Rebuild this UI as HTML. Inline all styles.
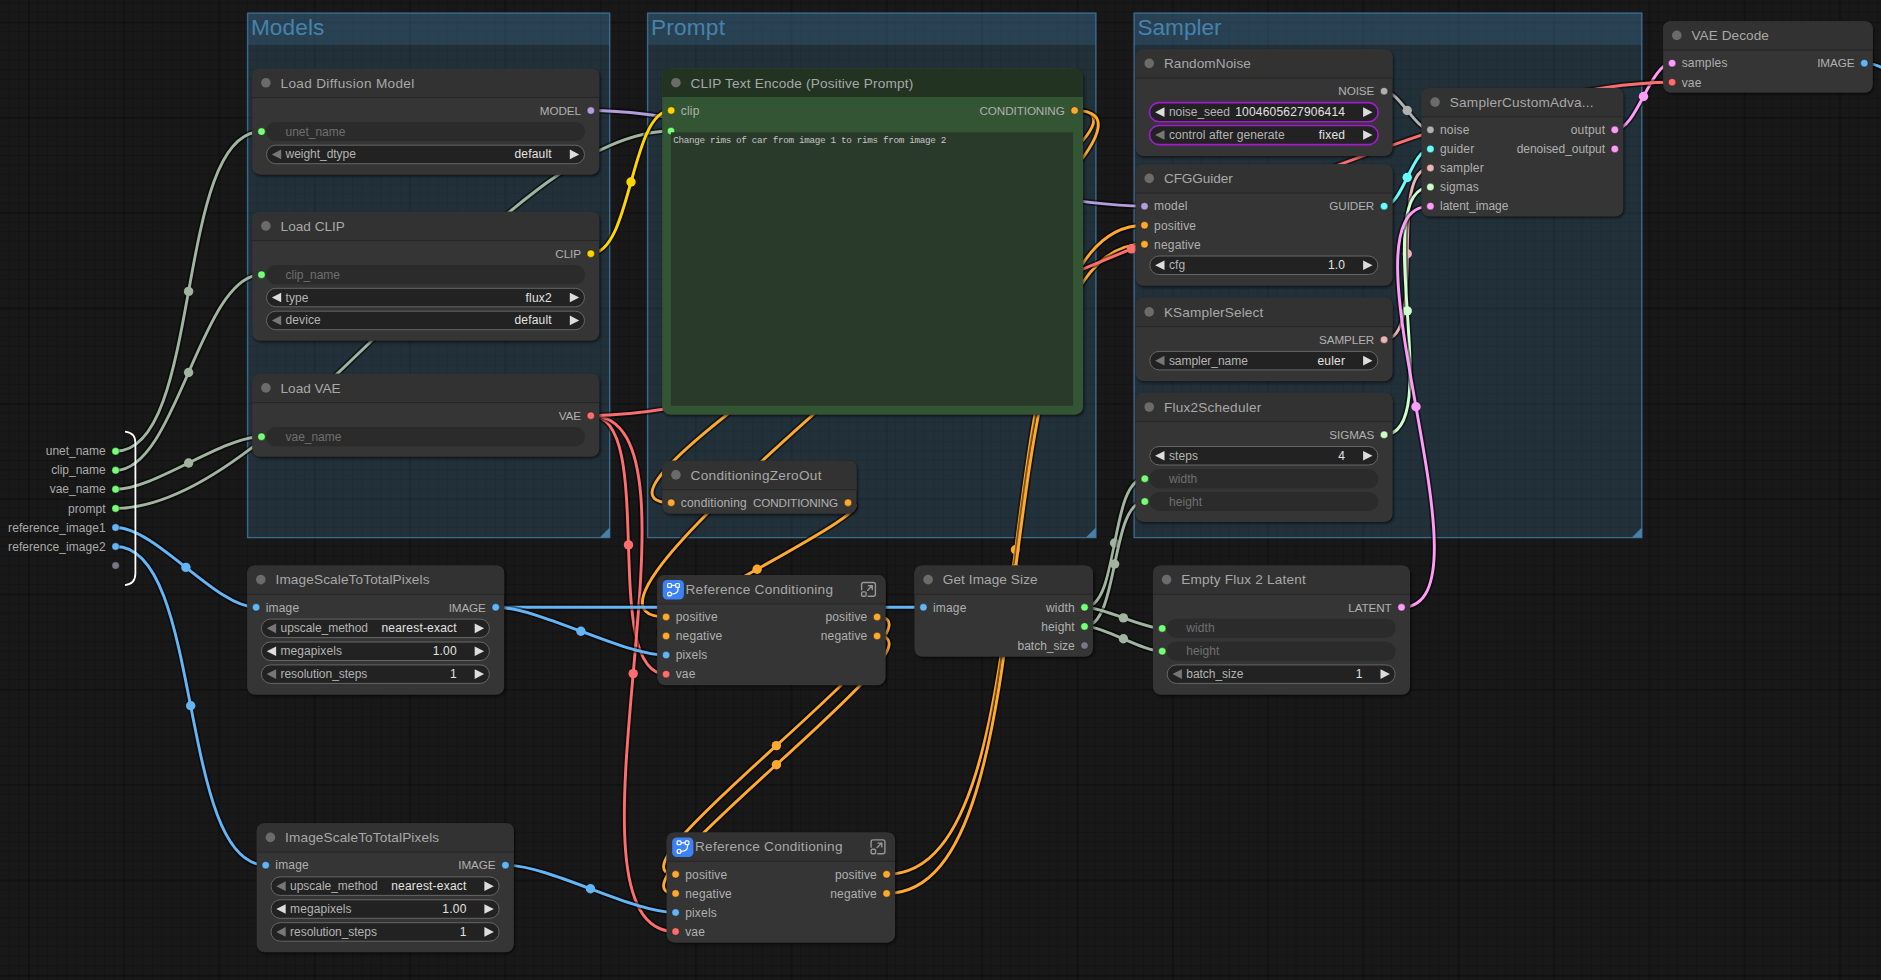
<!DOCTYPE html>
<html lang="en"><head><meta charset="utf-8"><title>ComfyUI</title>
<style>
html,body{margin:0;padding:0;}
body{width:1881px;height:980px;overflow:hidden;position:relative;background-color:#181818;
 font-family:"Liberation Sans",Arial,sans-serif;
 background-image:
  linear-gradient(to right,rgba(0,0,0,.15) 1px,transparent 1px),
  linear-gradient(to bottom,rgba(0,0,0,.15) 1px,transparent 1px),
  linear-gradient(to right,rgba(0,0,0,.18) 1.5px,transparent 1.5px),
  linear-gradient(to bottom,rgba(0,0,0,.18) 1.5px,transparent 1.5px);
 background-size:9.535px 9.535px,9.535px 9.535px,95.35px 95.35px,95.35px 95.35px;
 background-position:27.9px 21.6px,27.9px 21.6px,27.9px 21.6px,27.9px 21.6px;}
#graph{position:absolute;left:0;top:0;width:1881px;height:980px;overflow:hidden;}
#graph text{font-family:"Liberation Sans",Arial,sans-serif;}
#graph text.m{font-family:"Liberation Mono",monospace;}
</style></head><body>
<svg id="graph" width="1881" height="980" viewBox="0 0 1881 980">
<defs><filter id="sh" x="-5%" y="-10%" width="110%" height="125%"><feGaussianBlur stdDeviation="1.6"/></filter></defs>
<g id="groups">
<rect x="247.6" y="13.1" width="362.1" height="524.5" fill="rgba(63,120,158,.25)" stroke="rgba(63,120,158,.85)" stroke-width="1.4"/>
<rect x="247.6" y="13.1" width="362.1" height="31.9" fill="rgba(63,120,158,.25)"/>
<path d="M609.7 527.6V537.6H599.7Z" fill="#4680ab"/>
<text x="250.90" y="34.80" font-size="22.6" fill="#4682ad" letter-spacing="0.12">Models</text>
<rect x="647.6" y="13.1" width="448.3" height="524.5" fill="rgba(63,120,158,.25)" stroke="rgba(63,120,158,.85)" stroke-width="1.4"/>
<rect x="647.6" y="13.1" width="448.3" height="31.9" fill="rgba(63,120,158,.25)"/>
<path d="M1095.9 527.6V537.6H1085.9Z" fill="#4680ab"/>
<text x="650.90" y="34.80" font-size="22.6" fill="#4682ad" letter-spacing="0.24">Prompt</text>
<rect x="1134.1" y="13.1" width="507.7" height="524.5" fill="rgba(63,120,158,.25)" stroke="rgba(63,120,158,.85)" stroke-width="1.4"/>
<rect x="1134.1" y="13.1" width="507.7" height="31.9" fill="rgba(63,120,158,.25)"/>
<path d="M1641.8 527.6V537.6H1631.8Z" fill="#4680ab"/>
<text x="1137.40" y="34.80" font-size="22.6" fill="#4682ad" letter-spacing="0.02">Sampler</text>
</g>
<g id="links" fill="none">
<path d="M115.6 451.2C203.4 451.2 173.7 131.6 261.5 131.6" stroke="rgba(0,0,0,.5)" stroke-width="6.4"/>
<path d="M115.6 451.2C203.4 451.2 173.7 131.6 261.5 131.6" stroke="#A0B4A0" stroke-width="2.9"/>
<circle cx="188.6" cy="291.4" r="4.7" fill="#A0B4A0"/>
<path d="M115.6 470.3C176.6 470.3 200.5 274.7 261.5 274.7" stroke="rgba(0,0,0,.5)" stroke-width="6.4"/>
<path d="M115.6 470.3C176.6 470.3 200.5 274.7 261.5 274.7" stroke="#A0B4A0" stroke-width="2.9"/>
<circle cx="188.6" cy="372.5" r="4.7" fill="#A0B4A0"/>
<path d="M115.6 489.3C154.4 489.3 222.7 436.7 261.5 436.7" stroke="rgba(0,0,0,.5)" stroke-width="6.4"/>
<path d="M115.6 489.3C154.4 489.3 222.7 436.7 261.5 436.7" stroke="#A0B4A0" stroke-width="2.9"/>
<circle cx="188.6" cy="463.0" r="4.7" fill="#A0B4A0"/>
<path d="M115.6 508.4C283.5 508.4 503.1 131.0 671.0 131.0" stroke="rgba(0,0,0,.5)" stroke-width="6.4"/>
<path d="M115.6 508.4C283.5 508.4 503.1 131.0 671.0 131.0" stroke="#A0B4A0" stroke-width="2.9"/>
<circle cx="393.3" cy="319.7" r="4.7" fill="#A0B4A0"/>
<path d="M590.8 110.5C731.3 110.5 1004.0 206.1 1144.5 206.1" stroke="rgba(0,0,0,.5)" stroke-width="6.4"/>
<path d="M590.8 110.5C731.3 110.5 1004.0 206.1 1144.5 206.1" stroke="#B39DDB" stroke-width="2.9"/>
<circle cx="867.6" cy="158.3" r="4.7" fill="#B39DDB"/>
<path d="M590.8 253.6C631.9 253.6 630.1 110.4 671.2 110.4" stroke="rgba(0,0,0,.5)" stroke-width="6.4"/>
<path d="M590.8 253.6C631.9 253.6 630.1 110.4 671.2 110.4" stroke="#FFD500" stroke-width="2.9"/>
<circle cx="631.0" cy="182.0" r="4.7" fill="#FFD500"/>
<path d="M590.8 415.6C658.1 415.6 598.8 674.2 666.1 674.2" stroke="rgba(0,0,0,.5)" stroke-width="6.4"/>
<path d="M590.8 415.6C658.1 415.6 598.8 674.2 666.1 674.2" stroke="#FF6E6E" stroke-width="2.9"/>
<circle cx="628.5" cy="544.9" r="4.7" fill="#FF6E6E"/>
<path d="M590.8 415.6C721.5 415.6 544.9 931.6 675.6 931.6" stroke="rgba(0,0,0,.5)" stroke-width="6.4"/>
<path d="M590.8 415.6C721.5 415.6 544.9 931.6 675.6 931.6" stroke="#FF6E6E" stroke-width="2.9"/>
<circle cx="633.2" cy="673.6" r="4.7" fill="#FF6E6E"/>
<path d="M1074.6 110.4C1215.3 110.4 530.5 502.6 671.2 502.6" stroke="rgba(0,0,0,.5)" stroke-width="6.4"/>
<path d="M1074.6 110.4C1215.3 110.4 530.5 502.6 671.2 502.6" stroke="#FFA931" stroke-width="2.9"/>
<circle cx="872.9" cy="306.5" r="4.7" fill="#FFA931"/>
<path d="M1074.6 110.4C1237.3 110.4 503.4 616.9 666.1 616.9" stroke="rgba(0,0,0,.5)" stroke-width="6.4"/>
<path d="M1074.6 110.4C1237.3 110.4 503.4 616.9 666.1 616.9" stroke="#FFA931" stroke-width="2.9"/>
<circle cx="870.4" cy="363.7" r="4.7" fill="#FFA931"/>
<path d="M848.0 502.6C904.4 502.6 609.7 636.0 666.1 636.0" stroke="rgba(0,0,0,.5)" stroke-width="6.4"/>
<path d="M848.0 502.6C904.4 502.6 609.7 636.0 666.1 636.0" stroke="#FFA931" stroke-width="2.9"/>
<circle cx="757.1" cy="569.3" r="4.7" fill="#FFA931"/>
<path d="M877.1 616.9C958.8 616.9 593.9 874.3 675.6 874.3" stroke="rgba(0,0,0,.5)" stroke-width="6.4"/>
<path d="M877.1 616.9C958.8 616.9 593.9 874.3 675.6 874.3" stroke="#FFA931" stroke-width="2.9"/>
<circle cx="776.4" cy="745.6" r="4.7" fill="#FFA931"/>
<path d="M877.1 636.0C958.8 636.0 593.9 893.4 675.6 893.4" stroke="rgba(0,0,0,.5)" stroke-width="6.4"/>
<path d="M877.1 636.0C958.8 636.0 593.9 893.4 675.6 893.4" stroke="#FFA931" stroke-width="2.9"/>
<circle cx="776.4" cy="764.7" r="4.7" fill="#FFA931"/>
<path d="M886.6 874.3C1061.2 874.3 969.9 225.2 1144.5 225.2" stroke="rgba(0,0,0,.5)" stroke-width="6.4"/>
<path d="M886.6 874.3C1061.2 874.3 969.9 225.2 1144.5 225.2" stroke="#FFA931" stroke-width="2.9"/>
<circle cx="1015.5" cy="549.8" r="4.7" fill="#FFA931"/>
<path d="M886.6 893.4C1061.2 893.4 969.9 244.3 1144.5 244.3" stroke="rgba(0,0,0,.5)" stroke-width="6.4"/>
<path d="M886.6 893.4C1061.2 893.4 969.9 244.3 1144.5 244.3" stroke="#FFA931" stroke-width="2.9"/>
<circle cx="1015.5" cy="568.9" r="4.7" fill="#FFA931"/>
<path d="M115.6 527.5C156.0 527.5 215.7 607.3 256.1 607.3" stroke="rgba(0,0,0,.5)" stroke-width="6.4"/>
<path d="M115.6 527.5C156.0 527.5 215.7 607.3 256.1 607.3" stroke="#64B5F6" stroke-width="2.9"/>
<circle cx="185.9" cy="567.4" r="4.7" fill="#64B5F6"/>
<path d="M115.6 546.5C203.7 546.5 177.6 865.1 265.7 865.1" stroke="rgba(0,0,0,.5)" stroke-width="6.4"/>
<path d="M115.6 546.5C203.7 546.5 177.6 865.1 265.7 865.1" stroke="#64B5F6" stroke-width="2.9"/>
<circle cx="190.7" cy="705.8" r="4.7" fill="#64B5F6"/>
<path d="M495.7 607.3C602.6 607.3 816.5 607.3 923.4 607.3" stroke="rgba(0,0,0,.5)" stroke-width="6.4"/>
<path d="M495.7 607.3C602.6 607.3 816.5 607.3 923.4 607.3" stroke="#64B5F6" stroke-width="2.9"/>
<circle cx="709.5" cy="607.3" r="4.7" fill="#64B5F6"/>
<path d="M495.7 607.3C539.9 607.3 621.9 655.1 666.1 655.1" stroke="rgba(0,0,0,.5)" stroke-width="6.4"/>
<path d="M495.7 607.3C539.9 607.3 621.9 655.1 666.1 655.1" stroke="#64B5F6" stroke-width="2.9"/>
<circle cx="580.9" cy="631.2" r="4.7" fill="#64B5F6"/>
<path d="M505.4 865.1C549.6 865.1 631.4 912.5 675.6 912.5" stroke="rgba(0,0,0,.5)" stroke-width="6.4"/>
<path d="M505.4 865.1C549.6 865.1 631.4 912.5 675.6 912.5" stroke="#64B5F6" stroke-width="2.9"/>
<circle cx="590.5" cy="888.8" r="4.7" fill="#64B5F6"/>
<path d="M1084.5 607.3C1120.0 607.3 1109.3 478.7 1144.8 478.7" stroke="rgba(0,0,0,.5)" stroke-width="6.4"/>
<path d="M1084.5 607.3C1120.0 607.3 1109.3 478.7 1144.8 478.7" stroke="#A0B4A0" stroke-width="2.9"/>
<circle cx="1114.6" cy="543.0" r="4.7" fill="#A0B4A0"/>
<path d="M1084.5 626.4C1119.2 626.4 1110.1 501.6 1144.8 501.6" stroke="rgba(0,0,0,.5)" stroke-width="6.4"/>
<path d="M1084.5 626.4C1119.2 626.4 1110.1 501.6 1144.8 501.6" stroke="#A0B4A0" stroke-width="2.9"/>
<circle cx="1114.6" cy="564.0" r="4.7" fill="#A0B4A0"/>
<path d="M1084.5 607.3C1104.6 607.3 1142.1 628.4 1162.2 628.4" stroke="rgba(0,0,0,.5)" stroke-width="6.4"/>
<path d="M1084.5 607.3C1104.6 607.3 1142.1 628.4 1162.2 628.4" stroke="#A0B4A0" stroke-width="2.9"/>
<circle cx="1123.4" cy="617.9" r="4.7" fill="#A0B4A0"/>
<path d="M1084.5 626.4C1104.9 626.4 1141.8 651.3 1162.2 651.3" stroke="rgba(0,0,0,.5)" stroke-width="6.4"/>
<path d="M1084.5 626.4C1104.9 626.4 1141.8 651.3 1162.2 651.3" stroke="#A0B4A0" stroke-width="2.9"/>
<circle cx="1123.4" cy="638.8" r="4.7" fill="#A0B4A0"/>
<path d="M1384.1 91.1C1399.2 91.1 1415.3 129.8 1430.4 129.8" stroke="rgba(0,0,0,.5)" stroke-width="6.4"/>
<path d="M1384.1 91.1C1399.2 91.1 1415.3 129.8 1430.4 129.8" stroke="#B0B0B0" stroke-width="2.9"/>
<circle cx="1407.2" cy="110.5" r="4.7" fill="#B0B0B0"/>
<path d="M1384.1 206.1C1402.5 206.1 1412.0 148.9 1430.4 148.9" stroke="rgba(0,0,0,.5)" stroke-width="6.4"/>
<path d="M1384.1 206.1C1402.5 206.1 1412.0 148.9 1430.4 148.9" stroke="#66FFFF" stroke-width="2.9"/>
<circle cx="1407.2" cy="177.5" r="4.7" fill="#66FFFF"/>
<path d="M1384.1 339.6C1428.5 339.6 1386.0 168.0 1430.4 168.0" stroke="rgba(0,0,0,.5)" stroke-width="6.4"/>
<path d="M1384.1 339.6C1428.5 339.6 1386.0 168.0 1430.4 168.0" stroke="#ECB4B4" stroke-width="2.9"/>
<circle cx="1407.2" cy="253.8" r="4.7" fill="#ECB4B4"/>
<path d="M1384.1 434.7C1447.1 434.7 1367.4 187.1 1430.4 187.1" stroke="rgba(0,0,0,.5)" stroke-width="6.4"/>
<path d="M1384.1 434.7C1447.1 434.7 1367.4 187.1 1430.4 187.1" stroke="#CDFFCD" stroke-width="2.9"/>
<circle cx="1407.2" cy="310.9" r="4.7" fill="#CDFFCD"/>
<path d="M1401.5 607.3C1502.1 607.3 1329.8 206.1 1430.4 206.1" stroke="rgba(0,0,0,.5)" stroke-width="6.4"/>
<path d="M1401.5 607.3C1502.1 607.3 1329.8 206.1 1430.4 206.1" stroke="#FF9CF9" stroke-width="2.9"/>
<circle cx="1416.0" cy="406.7" r="4.7" fill="#FF9CF9"/>
<path d="M1614.8 129.8C1636.8 129.8 1650.1 63.1 1672.1 63.1" stroke="rgba(0,0,0,.5)" stroke-width="6.4"/>
<path d="M1614.8 129.8C1636.8 129.8 1650.1 63.1 1672.1 63.1" stroke="#FF9CF9" stroke-width="2.9"/>
<circle cx="1643.5" cy="96.5" r="4.7" fill="#FF9CF9"/>
<path d="M1864.3 63.1C1943.5 63.1 1970.8 320.0 2050.0 320.0" stroke="rgba(0,0,0,.5)" stroke-width="6.4"/>
<path d="M1864.3 63.1C1943.5 63.1 1970.8 320.0 2050.0 320.0" stroke="#64B5F6" stroke-width="2.9"/>
<circle cx="1957.2" cy="191.6" r="4.7" fill="#64B5F6"/>
<path d="M590.8 415.6C873.7 415.6 1389.2 82.2 1672.1 82.2" stroke="rgba(0,0,0,.5)" stroke-width="6.4"/>
<path d="M590.8 415.6C873.7 415.6 1389.2 82.2 1672.1 82.2" stroke="#FF6E6E" stroke-width="2.9"/>
<circle cx="1131.5" cy="248.9" r="4.7" fill="#FF6E6E"/>
</g>
<g id="subgraph-inputs">
<path d="M125 431.6 Q135.4 432.6 135.4 443 L135.4 573.6 Q135.4 584 125 585.2" stroke="#fff" stroke-width="1.8" fill="none"/>
<circle cx="115.60" cy="451.20" r="3.75" fill="#77FF77" stroke="rgba(0,0,0,.55)" stroke-width=".7"/>
<text x="105.57" y="455.30" font-size="12" fill="#aaa" text-anchor="end" letter-spacing="-0.03">unet_name</text>
<circle cx="115.60" cy="470.30" r="3.75" fill="#77FF77" stroke="rgba(0,0,0,.55)" stroke-width=".7"/>
<text x="105.57" y="474.40" font-size="12" fill="#aaa" text-anchor="end" letter-spacing="-0.03">clip_name</text>
<circle cx="115.60" cy="489.30" r="3.75" fill="#77FF77" stroke="rgba(0,0,0,.55)" stroke-width=".7"/>
<text x="105.57" y="493.40" font-size="12" fill="#aaa" text-anchor="end" letter-spacing="-0.03">vae_name</text>
<circle cx="115.60" cy="508.40" r="3.75" fill="#77FF77" stroke="rgba(0,0,0,.55)" stroke-width=".7"/>
<text x="105.65" y="512.50" font-size="12" fill="#aaa" text-anchor="end" letter-spacing="0.05">prompt</text>
<circle cx="115.60" cy="527.50" r="3.75" fill="#64B5F6" stroke="rgba(0,0,0,.55)" stroke-width=".7"/>
<text x="105.65" y="531.60" font-size="12" fill="#aaa" text-anchor="end" letter-spacing="0.05">reference_image1</text>
<circle cx="115.60" cy="546.50" r="3.75" fill="#64B5F6" stroke="rgba(0,0,0,.55)" stroke-width=".7"/>
<text x="105.65" y="550.60" font-size="12" fill="#aaa" text-anchor="end" letter-spacing="0.05">reference_image2</text>
<circle cx="115.60" cy="565.60" r="3.75" fill="#777788" stroke="rgba(0,0,0,.55)" stroke-width=".7"/>
</g>
<g class="node" id="node-ldm">
<rect x="253.4" y="70.2" width="347.1" height="106.1" rx="8.0" fill="rgba(0,0,0,.6)" filter="url(#sh)"/>
<rect x="252.2" y="68.6" width="347.1" height="106.1" rx="8.0" fill="#353535"/>
<path d="M252.2 97.2V76.6Q252.2 68.6 260.2 68.6H591.3Q599.3 68.6 599.3 76.6V97.2Z" fill="#323232"/>
<path d="M252.2 97.5H599.3" stroke="#262626" stroke-width="1"/>
<circle cx="265.9" cy="82.8" r="4.8" fill="#6b6b6b"/>
<text x="280.60" y="87.60" font-size="13.6" fill="#a8a8a8" letter-spacing="0.324">Load Diffusion Model</text>
<circle cx="590.80" cy="110.55" r="3.75" fill="#B39DDB" stroke="rgba(0,0,0,.55)" stroke-width=".7"/>
<text x="580.90" y="114.85" font-size="11.7" fill="#b0b0b0" text-anchor="end" letter-spacing="-0.1">MODEL</text>
<rect x="266.0" y="122.0" width="319.0" height="19.1" rx="9.55" fill="#2b2b2b"/>
<circle cx="261.50" cy="131.59" r="3.75" fill="#77FF77" stroke="rgba(0,0,0,.55)" stroke-width=".7"/>
<text x="285.60" y="135.59" font-size="12" fill="#6f6f6f" letter-spacing="-0.04">unet_name</text>
<rect x="266.5" y="145.2" width="318.0" height="18.5" rx="9.25" fill="#222" stroke="#666" stroke-width="1"/>
<path d="M281.20 149.62L271.80 154.43L281.20 159.22Z" fill="#777"/>
<path d="M569.80 149.62L579.20 154.43L569.80 159.22Z" fill="#ddd"/>
<text x="285.60" y="158.47" font-size="12" fill="#b4b4b4" letter-spacing="-0.04">weight_dtype</text>
<text x="551.90" y="158.47" font-size="12" fill="#e2e2e2" text-anchor="end" letter-spacing="0.2">default</text>
</g>
<g class="node" id="node-lclip">
<rect x="253.4" y="213.3" width="347.1" height="129.1" rx="8.0" fill="rgba(0,0,0,.6)" filter="url(#sh)"/>
<rect x="252.2" y="211.7" width="347.1" height="129.1" rx="8.0" fill="#353535"/>
<path d="M252.2 240.3V219.7Q252.2 211.7 260.2 211.7H591.3Q599.3 211.7 599.3 219.7V240.3Z" fill="#323232"/>
<path d="M252.2 240.6H599.3" stroke="#262626" stroke-width="1"/>
<circle cx="265.9" cy="225.9" r="4.8" fill="#6b6b6b"/>
<text x="280.60" y="230.70" font-size="13.6" fill="#a8a8a8" letter-spacing="0.003">Load CLIP</text>
<circle cx="590.80" cy="253.65" r="3.75" fill="#FFD500" stroke="rgba(0,0,0,.55)" stroke-width=".7"/>
<text x="580.90" y="257.95" font-size="11.7" fill="#b0b0b0" text-anchor="end" letter-spacing="-0.1">CLIP</text>
<rect x="266.0" y="265.1" width="319.0" height="19.1" rx="9.55" fill="#2b2b2b"/>
<circle cx="261.50" cy="274.69" r="3.75" fill="#77FF77" stroke="rgba(0,0,0,.55)" stroke-width=".7"/>
<text x="285.60" y="278.69" font-size="12" fill="#6f6f6f" letter-spacing="-0.04">clip_name</text>
<rect x="266.5" y="288.3" width="318.0" height="18.5" rx="9.25" fill="#222" stroke="#666" stroke-width="1"/>
<path d="M281.20 292.73L271.80 297.53L281.20 302.33Z" fill="#ddd"/>
<path d="M569.80 292.73L579.20 297.53L569.80 302.33Z" fill="#ddd"/>
<text x="285.60" y="301.58" font-size="12" fill="#b4b4b4" letter-spacing="0.08">type</text>
<text x="551.90" y="301.58" font-size="12" fill="#e2e2e2" text-anchor="end" letter-spacing="0.2">flux2</text>
<rect x="266.5" y="311.2" width="318.0" height="18.5" rx="9.25" fill="#222" stroke="#666" stroke-width="1"/>
<path d="M281.20 315.61L271.80 320.41L281.20 325.21Z" fill="#777"/>
<path d="M569.80 315.61L579.20 320.41L569.80 325.21Z" fill="#ddd"/>
<text x="285.60" y="324.46" font-size="12" fill="#b4b4b4" letter-spacing="0.08">device</text>
<text x="551.90" y="324.46" font-size="12" fill="#e2e2e2" text-anchor="end" letter-spacing="0.2">default</text>
</g>
<g class="node" id="node-lvae">
<rect x="253.4" y="375.3" width="347.1" height="83.1" rx="8.0" fill="rgba(0,0,0,.6)" filter="url(#sh)"/>
<rect x="252.2" y="373.7" width="347.1" height="83.1" rx="8.0" fill="#353535"/>
<path d="M252.2 402.3V381.7Q252.2 373.7 260.2 373.7H591.3Q599.3 373.7 599.3 381.7V402.3Z" fill="#323232"/>
<path d="M252.2 402.6H599.3" stroke="#262626" stroke-width="1"/>
<circle cx="265.9" cy="387.9" r="4.8" fill="#6b6b6b"/>
<text x="280.60" y="392.70" font-size="13.6" fill="#a8a8a8" letter-spacing="-0.03">Load VAE</text>
<circle cx="590.80" cy="415.65" r="3.75" fill="#FF6E6E" stroke="rgba(0,0,0,.55)" stroke-width=".7"/>
<text x="580.90" y="419.95" font-size="11.7" fill="#b0b0b0" text-anchor="end" letter-spacing="-0.1">VAE</text>
<rect x="266.0" y="427.1" width="319.0" height="19.1" rx="9.55" fill="#2b2b2b"/>
<circle cx="261.50" cy="436.69" r="3.75" fill="#77FF77" stroke="rgba(0,0,0,.55)" stroke-width=".7"/>
<text x="285.60" y="440.69" font-size="12" fill="#6f6f6f" letter-spacing="-0.04">vae_name</text>
</g>
<g class="node" id="node-clipenc">
<rect x="663.4" y="70.1" width="420.9" height="346.2" rx="8.0" fill="rgba(0,0,0,.6)" filter="url(#sh)"/>
<rect x="662.2" y="68.5" width="420.9" height="346.2" rx="8.0" fill="#335533"/>
<path d="M662.2 97.1V76.5Q662.2 68.5 670.2 68.5H1075.1Q1083.1 68.5 1083.1 76.5V97.1Z" fill="#223322"/>
<circle cx="675.9" cy="82.7" r="4.8" fill="#6b6b6b"/>
<text x="690.60" y="87.50" font-size="13.6" fill="#a8a8a8" letter-spacing="0.193">CLIP Text Encode (Positive Prompt)</text>
<circle cx="671.20" cy="110.45" r="3.75" fill="#FFD500" stroke="rgba(0,0,0,.55)" stroke-width=".7"/>
<text x="680.80" y="114.75" font-size="12" fill="#b0b0b0" letter-spacing="0.17">clip</text>
<circle cx="1074.60" cy="110.45" r="3.75" fill="#FFA931" stroke="rgba(0,0,0,.55)" stroke-width=".7"/>
<text x="1064.70" y="114.75" font-size="11.7" fill="#b0b0b0" text-anchor="end" letter-spacing="-0.1">CONDITIONING</text>
<circle cx="671.00" cy="131.00" r="3.75" fill="#77FF77" stroke="rgba(0,0,0,.55)" stroke-width=".7"/>
<rect x="670.9" y="132.3" width="402.2" height="273.5" fill="#2a3a2a"/>
<text x="673.20" y="143.00" font-size="9.3" fill="#c4c4c4" letter-spacing="-0.335" class="m">Change rims of car from image 1 to rims from image 2</text>
</g>
<g class="node" id="node-zero">
<rect x="663.4" y="462.3" width="194.3" height="53.1" rx="8.0" fill="rgba(0,0,0,.6)" filter="url(#sh)"/>
<rect x="662.2" y="460.7" width="194.3" height="53.1" rx="8.0" fill="#353535"/>
<path d="M662.2 489.3V468.7Q662.2 460.7 670.2 460.7H848.5Q856.5 460.7 856.5 468.7V489.3Z" fill="#323232"/>
<path d="M662.2 489.6H856.5" stroke="#262626" stroke-width="1"/>
<circle cx="675.9" cy="474.9" r="4.8" fill="#6b6b6b"/>
<text x="690.60" y="479.70" font-size="13.6" fill="#a8a8a8" letter-spacing="0.3">ConditioningZeroOut</text>
<circle cx="671.20" cy="502.65" r="3.75" fill="#FFA931" stroke="rgba(0,0,0,.55)" stroke-width=".7"/>
<text x="680.80" y="506.95" font-size="12" fill="#b0b0b0" letter-spacing="0.17">conditioning</text>
<circle cx="848.00" cy="502.65" r="3.75" fill="#FFA931" stroke="rgba(0,0,0,.55)" stroke-width=".7"/>
<text x="838.10" y="506.95" font-size="11.7" fill="#b0b0b0" text-anchor="end" letter-spacing="-0.1">CONDITIONING</text>
</g>
<g class="node" id="node-noise">
<rect x="1136.7" y="50.8" width="257.1" height="106.8" rx="8.0" fill="rgba(0,0,0,.6)" filter="url(#sh)"/>
<rect x="1135.5" y="49.2" width="257.1" height="106.8" rx="8.0" fill="#353535"/>
<path d="M1135.5 77.8V57.2Q1135.5 49.2 1143.5 49.2H1384.6Q1392.6 49.2 1392.6 57.2V77.8Z" fill="#323232"/>
<path d="M1135.5 78.1H1392.6" stroke="#262626" stroke-width="1"/>
<circle cx="1149.2" cy="63.4" r="4.8" fill="#6b6b6b"/>
<text x="1163.90" y="68.20" font-size="13.6" fill="#a8a8a8" letter-spacing="0.084">RandomNoise</text>
<circle cx="1384.10" cy="91.15" r="3.75" fill="#B0B0B0" stroke="rgba(0,0,0,.55)" stroke-width=".7"/>
<text x="1374.20" y="95.45" font-size="11.7" fill="#b0b0b0" text-anchor="end" letter-spacing="-0.1">NOISE</text>
<rect x="1149.5" y="102.6" width="228.6" height="19.1" rx="9.55" fill="#222" stroke="#a31bd0" stroke-width="1.6"/>
<path d="M1164.50 107.34L1155.10 112.14L1164.50 116.94Z" fill="#ddd"/>
<path d="M1363.10 107.34L1372.50 112.14L1363.10 116.94Z" fill="#ddd"/>
<text x="1168.90" y="116.19" font-size="12" fill="#b4b4b4" letter-spacing="-0.04">noise_seed</text>
<text x="1345.20" y="116.19" font-size="12" fill="#e2e2e2" text-anchor="end" letter-spacing="0.2">1004605627906414</text>
<rect x="1149.5" y="125.5" width="228.6" height="19.1" rx="9.55" fill="#222" stroke="#a31bd0" stroke-width="1.6"/>
<path d="M1164.50 130.23L1155.10 135.03L1164.50 139.83Z" fill="#777"/>
<path d="M1363.10 130.23L1372.50 135.03L1363.10 139.83Z" fill="#ddd"/>
<text x="1168.90" y="139.08" font-size="12" fill="#b4b4b4" letter-spacing="0.08">control after generate</text>
<text x="1345.20" y="139.08" font-size="12" fill="#e2e2e2" text-anchor="end" letter-spacing="0.2">fixed</text>
</g>
<g class="node" id="node-cfg">
<rect x="1136.7" y="165.8" width="257.1" height="121.6" rx="8.0" fill="rgba(0,0,0,.6)" filter="url(#sh)"/>
<rect x="1135.5" y="164.2" width="257.1" height="121.6" rx="8.0" fill="#353535"/>
<path d="M1135.5 192.8V172.2Q1135.5 164.2 1143.5 164.2H1384.6Q1392.6 164.2 1392.6 172.2V192.8Z" fill="#323232"/>
<path d="M1135.5 193.1H1392.6" stroke="#262626" stroke-width="1"/>
<circle cx="1149.2" cy="178.4" r="4.8" fill="#6b6b6b"/>
<text x="1163.90" y="183.20" font-size="13.6" fill="#a8a8a8" letter-spacing="-0.081">CFGGuider</text>
<circle cx="1144.50" cy="206.15" r="3.75" fill="#B39DDB" stroke="rgba(0,0,0,.55)" stroke-width=".7"/>
<text x="1154.10" y="210.45" font-size="12" fill="#b0b0b0" letter-spacing="0.17">model</text>
<circle cx="1144.50" cy="225.22" r="3.75" fill="#FFA931" stroke="rgba(0,0,0,.55)" stroke-width=".7"/>
<text x="1154.10" y="229.52" font-size="12" fill="#b0b0b0" letter-spacing="0.17">positive</text>
<circle cx="1144.50" cy="244.29" r="3.75" fill="#FFA931" stroke="rgba(0,0,0,.55)" stroke-width=".7"/>
<text x="1154.10" y="248.59" font-size="12" fill="#b0b0b0" letter-spacing="0.17">negative</text>
<circle cx="1384.10" cy="206.15" r="3.75" fill="#66FFFF" stroke="rgba(0,0,0,.55)" stroke-width=".7"/>
<text x="1374.20" y="210.45" font-size="11.7" fill="#b0b0b0" text-anchor="end" letter-spacing="-0.1">GUIDER</text>
<rect x="1149.8" y="256.0" width="228.0" height="18.5" rx="9.25" fill="#222" stroke="#666" stroke-width="1"/>
<path d="M1164.50 260.48L1155.10 265.28L1164.50 270.08Z" fill="#ddd"/>
<path d="M1363.10 260.48L1372.50 265.28L1363.10 270.08Z" fill="#ddd"/>
<text x="1168.90" y="269.33" font-size="12" fill="#b4b4b4" letter-spacing="0.08">cfg</text>
<text x="1345.20" y="269.33" font-size="12" fill="#e2e2e2" text-anchor="end" letter-spacing="0.2">1.0</text>
</g>
<g class="node" id="node-ksel">
<rect x="1136.7" y="299.3" width="257.1" height="83.5" rx="8.0" fill="rgba(0,0,0,.6)" filter="url(#sh)"/>
<rect x="1135.5" y="297.7" width="257.1" height="83.5" rx="8.0" fill="#353535"/>
<path d="M1135.5 326.3V305.7Q1135.5 297.7 1143.5 297.7H1384.6Q1392.6 297.7 1392.6 305.7V326.3Z" fill="#323232"/>
<path d="M1135.5 326.6H1392.6" stroke="#262626" stroke-width="1"/>
<circle cx="1149.2" cy="311.9" r="4.8" fill="#6b6b6b"/>
<text x="1163.90" y="316.70" font-size="13.6" fill="#a8a8a8" letter-spacing="0.149">KSamplerSelect</text>
<circle cx="1384.10" cy="339.65" r="3.75" fill="#ECB4B4" stroke="rgba(0,0,0,.55)" stroke-width=".7"/>
<text x="1374.20" y="343.95" font-size="11.7" fill="#b0b0b0" text-anchor="end" letter-spacing="-0.1">SAMPLER</text>
<rect x="1149.8" y="351.4" width="228.0" height="18.5" rx="9.25" fill="#222" stroke="#666" stroke-width="1"/>
<path d="M1164.50 355.84L1155.10 360.64L1164.50 365.44Z" fill="#777"/>
<path d="M1363.10 355.84L1372.50 360.64L1363.10 365.44Z" fill="#ddd"/>
<text x="1168.90" y="364.69" font-size="12" fill="#b4b4b4" letter-spacing="-0.04">sampler_name</text>
<text x="1345.20" y="364.69" font-size="12" fill="#e2e2e2" text-anchor="end" letter-spacing="0.2">euler</text>
</g>
<g class="node" id="node-sched">
<rect x="1136.7" y="394.4" width="257.1" height="129.1" rx="8.0" fill="rgba(0,0,0,.6)" filter="url(#sh)"/>
<rect x="1135.5" y="392.8" width="257.1" height="129.1" rx="8.0" fill="#353535"/>
<path d="M1135.5 421.4V400.8Q1135.5 392.8 1143.5 392.8H1384.6Q1392.6 392.8 1392.6 400.8V421.4Z" fill="#323232"/>
<path d="M1135.5 421.7H1392.6" stroke="#262626" stroke-width="1"/>
<circle cx="1149.2" cy="407.0" r="4.8" fill="#6b6b6b"/>
<text x="1163.90" y="411.80" font-size="13.6" fill="#a8a8a8" letter-spacing="0.221">Flux2Scheduler</text>
<circle cx="1384.10" cy="434.75" r="3.75" fill="#CDFFCD" stroke="rgba(0,0,0,.55)" stroke-width=".7"/>
<text x="1374.20" y="439.05" font-size="11.7" fill="#b0b0b0" text-anchor="end" letter-spacing="-0.1">SIGMAS</text>
<rect x="1149.8" y="446.5" width="228.0" height="18.5" rx="9.25" fill="#222" stroke="#666" stroke-width="1"/>
<path d="M1164.50 450.94L1155.10 455.74L1164.50 460.54Z" fill="#ddd"/>
<path d="M1363.10 450.94L1372.50 455.74L1363.10 460.54Z" fill="#ddd"/>
<text x="1168.90" y="459.79" font-size="12" fill="#b4b4b4" letter-spacing="0.08">steps</text>
<text x="1345.20" y="459.79" font-size="12" fill="#e2e2e2" text-anchor="end" letter-spacing="0.2">4</text>
<rect x="1149.3" y="469.1" width="229.0" height="19.1" rx="9.55" fill="#2b2b2b"/>
<circle cx="1144.80" cy="478.68" r="3.75" fill="#77FF77" stroke="rgba(0,0,0,.55)" stroke-width=".7"/>
<text x="1168.90" y="482.68" font-size="12" fill="#6f6f6f" letter-spacing="0.08">width</text>
<rect x="1149.3" y="492.0" width="229.0" height="19.1" rx="9.55" fill="#2b2b2b"/>
<circle cx="1144.80" cy="501.56" r="3.75" fill="#77FF77" stroke="rgba(0,0,0,.55)" stroke-width=".7"/>
<text x="1168.90" y="505.56" font-size="12" fill="#6f6f6f" letter-spacing="0.08">height</text>
</g>
<g class="node" id="node-sca">
<rect x="1422.6" y="89.5" width="201.9" height="128.6" rx="8.0" fill="rgba(0,0,0,.6)" filter="url(#sh)"/>
<rect x="1421.4" y="87.9" width="201.9" height="128.6" rx="8.0" fill="#353535"/>
<path d="M1421.4 116.5V95.9Q1421.4 87.9 1429.4 87.9H1615.3Q1623.3 87.9 1623.3 95.9V116.5Z" fill="#323232"/>
<path d="M1421.4 116.8H1623.3" stroke="#262626" stroke-width="1"/>
<circle cx="1435.1" cy="102.1" r="4.8" fill="#6b6b6b"/>
<text x="1449.80" y="106.90" font-size="13.6" fill="#a8a8a8" letter-spacing="0.213">SamplerCustomAdva...</text>
<circle cx="1430.40" cy="129.85" r="3.75" fill="#B0B0B0" stroke="rgba(0,0,0,.55)" stroke-width=".7"/>
<text x="1440.00" y="134.15" font-size="12" fill="#b0b0b0" letter-spacing="0.17">noise</text>
<circle cx="1430.40" cy="148.92" r="3.75" fill="#66FFFF" stroke="rgba(0,0,0,.55)" stroke-width=".7"/>
<text x="1440.00" y="153.22" font-size="12" fill="#b0b0b0" letter-spacing="0.17">guider</text>
<circle cx="1430.40" cy="167.99" r="3.75" fill="#ECB4B4" stroke="rgba(0,0,0,.55)" stroke-width=".7"/>
<text x="1440.00" y="172.29" font-size="12" fill="#b0b0b0" letter-spacing="0.17">sampler</text>
<circle cx="1430.40" cy="187.06" r="3.75" fill="#CDFFCD" stroke="rgba(0,0,0,.55)" stroke-width=".7"/>
<text x="1440.00" y="191.36" font-size="12" fill="#b0b0b0" letter-spacing="0.17">sigmas</text>
<circle cx="1430.40" cy="206.13" r="3.75" fill="#FF9CF9" stroke="rgba(0,0,0,.55)" stroke-width=".7"/>
<text x="1440.00" y="210.43" font-size="12" fill="#b0b0b0" letter-spacing="-0.03">latent_image</text>
<circle cx="1614.80" cy="129.85" r="3.75" fill="#FF9CF9" stroke="rgba(0,0,0,.55)" stroke-width=".7"/>
<text x="1605.17" y="134.15" font-size="12" fill="#b0b0b0" text-anchor="end" letter-spacing="0.17">output</text>
<circle cx="1614.80" cy="148.92" r="3.75" fill="#FF9CF9" stroke="rgba(0,0,0,.55)" stroke-width=".7"/>
<text x="1604.97" y="153.22" font-size="12" fill="#b0b0b0" text-anchor="end" letter-spacing="-0.03">denoised_output</text>
</g>
<g class="node" id="node-vaedec">
<rect x="1664.3" y="22.8" width="209.7" height="71.6" rx="8.0" fill="rgba(0,0,0,.6)" filter="url(#sh)"/>
<rect x="1663.1" y="21.2" width="209.7" height="71.6" rx="8.0" fill="#353535"/>
<path d="M1663.1 49.8V29.2Q1663.1 21.2 1671.1 21.2H1864.8Q1872.8 21.2 1872.8 29.2V49.8Z" fill="#323232"/>
<path d="M1663.1 50.1H1872.8" stroke="#262626" stroke-width="1"/>
<circle cx="1676.8" cy="35.4" r="4.8" fill="#6b6b6b"/>
<text x="1691.50" y="40.20" font-size="13.6" fill="#a8a8a8" letter-spacing="0.064">VAE Decode</text>
<circle cx="1672.10" cy="63.15" r="3.75" fill="#FF9CF9" stroke="rgba(0,0,0,.55)" stroke-width=".7"/>
<text x="1681.70" y="67.45" font-size="12" fill="#b0b0b0" letter-spacing="0.17">samples</text>
<circle cx="1672.10" cy="82.22" r="3.75" fill="#FF6E6E" stroke="rgba(0,0,0,.55)" stroke-width=".7"/>
<text x="1681.70" y="86.52" font-size="12" fill="#b0b0b0" letter-spacing="0.17">vae</text>
<circle cx="1864.30" cy="63.15" r="3.75" fill="#64B5F6" stroke="rgba(0,0,0,.55)" stroke-width=".7"/>
<text x="1854.40" y="67.45" font-size="11.7" fill="#b0b0b0" text-anchor="end" letter-spacing="-0.1">IMAGE</text>
</g>
<g class="node" id="node-scale1">
<rect x="248.3" y="567.0" width="257.1" height="129.4" rx="8.0" fill="rgba(0,0,0,.6)" filter="url(#sh)"/>
<rect x="247.1" y="565.4" width="257.1" height="129.4" rx="8.0" fill="#353535"/>
<path d="M247.1 594.0V573.4Q247.1 565.4 255.1 565.4H496.2Q504.2 565.4 504.2 573.4V594.0Z" fill="#323232"/>
<path d="M247.1 594.3H504.2" stroke="#262626" stroke-width="1"/>
<circle cx="260.8" cy="579.6" r="4.8" fill="#6b6b6b"/>
<text x="275.50" y="584.40" font-size="13.6" fill="#a8a8a8" letter-spacing="0.131">ImageScaleToTotalPixels</text>
<circle cx="256.10" cy="607.35" r="3.75" fill="#64B5F6" stroke="rgba(0,0,0,.55)" stroke-width=".7"/>
<text x="265.70" y="611.65" font-size="12" fill="#b0b0b0" letter-spacing="0.17">image</text>
<circle cx="495.70" cy="607.35" r="3.75" fill="#64B5F6" stroke="rgba(0,0,0,.55)" stroke-width=".7"/>
<text x="485.80" y="611.65" font-size="11.7" fill="#b0b0b0" text-anchor="end" letter-spacing="-0.1">IMAGE</text>
<rect x="261.4" y="619.1" width="228.0" height="18.5" rx="9.25" fill="#222" stroke="#666" stroke-width="1"/>
<path d="M276.10 623.54L266.70 628.34L276.10 633.14Z" fill="#777"/>
<path d="M474.70 623.54L484.10 628.34L474.70 633.14Z" fill="#ddd"/>
<text x="280.50" y="632.39" font-size="12" fill="#b4b4b4" letter-spacing="-0.04">upscale_method</text>
<text x="456.80" y="632.39" font-size="12" fill="#e2e2e2" text-anchor="end" letter-spacing="0.2">nearest-exact</text>
<rect x="261.4" y="642.0" width="228.0" height="18.5" rx="9.25" fill="#222" stroke="#666" stroke-width="1"/>
<path d="M276.10 646.43L266.70 651.23L276.10 656.03Z" fill="#ddd"/>
<path d="M474.70 646.43L484.10 651.23L474.70 656.03Z" fill="#ddd"/>
<text x="280.50" y="655.28" font-size="12" fill="#b4b4b4" letter-spacing="0.08">megapixels</text>
<text x="456.80" y="655.28" font-size="12" fill="#e2e2e2" text-anchor="end" letter-spacing="0.2">1.00</text>
<rect x="261.4" y="664.9" width="228.0" height="18.5" rx="9.25" fill="#222" stroke="#666" stroke-width="1"/>
<path d="M276.10 669.31L266.70 674.11L276.10 678.91Z" fill="#777"/>
<path d="M474.70 669.31L484.10 674.11L474.70 678.91Z" fill="#ddd"/>
<text x="280.50" y="678.16" font-size="12" fill="#b4b4b4" letter-spacing="-0.04">resolution_steps</text>
<text x="456.80" y="678.16" font-size="12" fill="#e2e2e2" text-anchor="end" letter-spacing="0.2">1</text>
</g>
<g class="node" id="node-scale2">
<rect x="257.9" y="824.8" width="257.2" height="129.1" rx="8.0" fill="rgba(0,0,0,.6)" filter="url(#sh)"/>
<rect x="256.7" y="823.2" width="257.2" height="129.1" rx="8.0" fill="#353535"/>
<path d="M256.7 851.8V831.2Q256.7 823.2 264.7 823.2H505.9Q513.9 823.2 513.9 831.2V851.8Z" fill="#323232"/>
<path d="M256.7 852.1H513.9" stroke="#262626" stroke-width="1"/>
<circle cx="270.4" cy="837.4" r="4.8" fill="#6b6b6b"/>
<text x="285.10" y="842.20" font-size="13.6" fill="#a8a8a8" letter-spacing="0.131">ImageScaleToTotalPixels</text>
<circle cx="265.70" cy="865.15" r="3.75" fill="#64B5F6" stroke="rgba(0,0,0,.55)" stroke-width=".7"/>
<text x="275.30" y="869.45" font-size="12" fill="#b0b0b0" letter-spacing="0.17">image</text>
<circle cx="505.40" cy="865.15" r="3.75" fill="#64B5F6" stroke="rgba(0,0,0,.55)" stroke-width=".7"/>
<text x="495.50" y="869.45" font-size="11.7" fill="#b0b0b0" text-anchor="end" letter-spacing="-0.1">IMAGE</text>
<rect x="271.0" y="876.9" width="228.1" height="18.5" rx="9.25" fill="#222" stroke="#666" stroke-width="1"/>
<path d="M285.70 881.34L276.30 886.14L285.70 890.94Z" fill="#777"/>
<path d="M484.40 881.34L493.80 886.14L484.40 890.94Z" fill="#ddd"/>
<text x="290.10" y="890.19" font-size="12" fill="#b4b4b4" letter-spacing="-0.04">upscale_method</text>
<text x="466.50" y="890.19" font-size="12" fill="#e2e2e2" text-anchor="end" letter-spacing="0.2">nearest-exact</text>
<rect x="271.0" y="899.8" width="228.1" height="18.5" rx="9.25" fill="#222" stroke="#666" stroke-width="1"/>
<path d="M285.70 904.23L276.30 909.03L285.70 913.83Z" fill="#ddd"/>
<path d="M484.40 904.23L493.80 909.03L484.40 913.83Z" fill="#ddd"/>
<text x="290.10" y="913.08" font-size="12" fill="#b4b4b4" letter-spacing="0.08">megapixels</text>
<text x="466.50" y="913.08" font-size="12" fill="#e2e2e2" text-anchor="end" letter-spacing="0.2">1.00</text>
<rect x="271.0" y="922.7" width="228.1" height="18.5" rx="9.25" fill="#222" stroke="#666" stroke-width="1"/>
<path d="M285.70 927.11L276.30 931.91L285.70 936.71Z" fill="#777"/>
<path d="M484.40 927.11L493.80 931.91L484.40 936.71Z" fill="#ddd"/>
<text x="290.10" y="935.96" font-size="12" fill="#b4b4b4" letter-spacing="-0.04">resolution_steps</text>
<text x="466.50" y="935.96" font-size="12" fill="#e2e2e2" text-anchor="end" letter-spacing="0.2">1</text>
</g>
<g class="node" id="node-ref1">
<rect x="658.3" y="576.6" width="228.5" height="110.3" rx="8.0" fill="rgba(0,0,0,.6)" filter="url(#sh)"/>
<rect x="657.1" y="575.0" width="228.5" height="110.3" rx="8.0" fill="#353535"/>
<path d="M657.1 603.6V583.0Q657.1 575.0 665.1 575.0H877.6Q885.6 575.0 885.6 583.0V603.6Z" fill="#323232"/>
<path d="M657.1 603.9H885.6" stroke="#262626" stroke-width="1"/>
<g transform="translate(662.7 580.0)"><rect x="0" y="0" width="21.2" height="19.6" rx="4.6" fill="#3b82f6"/><g fill="none" stroke="#fff" stroke-width="1.2"><rect x="4.9" y="3.5" width="3.9" height="3.8" rx=".9"/><rect x="13" y="3.5" width="3.7" height="3.8" rx=".9"/><circle cx="6.85" cy="14" r="1.95"/><path d="M8.8 5.4H13M15.3 7.3V9.4Q15.3 13.7 8.8 14"/></g></g>
<g transform="translate(856.0 578.0)" fill="none" stroke="#979797" stroke-width="1.4" stroke-linecap="round" stroke-linejoin="round"><path d="M5.6 11.8V6.5Q5.6 4.5 7.6 4.5H17.4Q19.4 4.5 19.4 6.5V16.3Q19.4 18.3 17.4 18.3H12.2"/><rect x="5.6" y="13.9" width="4.5" height="4.4" rx="1.2"/><path d="M11.7 12.2L16.2 7.7M12.5 7.7H16.3V11.5"/></g>
<text x="685.50" y="594.00" font-size="13.6" fill="#a8a8a8" letter-spacing="0.257">Reference Conditioning</text>
<circle cx="666.10" cy="616.95" r="3.75" fill="#FFA931" stroke="rgba(0,0,0,.55)" stroke-width=".7"/>
<text x="675.70" y="621.25" font-size="12" fill="#b0b0b0" letter-spacing="0.17">positive</text>
<circle cx="666.10" cy="636.02" r="3.75" fill="#FFA931" stroke="rgba(0,0,0,.55)" stroke-width=".7"/>
<text x="675.70" y="640.32" font-size="12" fill="#b0b0b0" letter-spacing="0.17">negative</text>
<circle cx="666.10" cy="655.09" r="3.75" fill="#64B5F6" stroke="rgba(0,0,0,.55)" stroke-width=".7"/>
<text x="675.70" y="659.39" font-size="12" fill="#b0b0b0" letter-spacing="0.17">pixels</text>
<circle cx="666.10" cy="674.16" r="3.75" fill="#FF6E6E" stroke="rgba(0,0,0,.55)" stroke-width=".7"/>
<text x="675.70" y="678.46" font-size="12" fill="#b0b0b0" letter-spacing="0.17">vae</text>
<circle cx="877.10" cy="616.95" r="3.75" fill="#FFA931" stroke="rgba(0,0,0,.55)" stroke-width=".7"/>
<text x="867.47" y="621.25" font-size="12" fill="#b0b0b0" text-anchor="end" letter-spacing="0.17">positive</text>
<circle cx="877.10" cy="636.02" r="3.75" fill="#FFA931" stroke="rgba(0,0,0,.55)" stroke-width=".7"/>
<text x="867.47" y="640.32" font-size="12" fill="#b0b0b0" text-anchor="end" letter-spacing="0.17">negative</text>
</g>
<g class="node" id="node-ref2">
<rect x="667.8" y="834.0" width="228.5" height="110.3" rx="8.0" fill="rgba(0,0,0,.6)" filter="url(#sh)"/>
<rect x="666.6" y="832.4" width="228.5" height="110.3" rx="8.0" fill="#353535"/>
<path d="M666.6 861.0V840.4Q666.6 832.4 674.6 832.4H887.1Q895.1 832.4 895.1 840.4V861.0Z" fill="#323232"/>
<path d="M666.6 861.3H895.1" stroke="#262626" stroke-width="1"/>
<g transform="translate(672.2 837.4)"><rect x="0" y="0" width="21.2" height="19.6" rx="4.6" fill="#3b82f6"/><g fill="none" stroke="#fff" stroke-width="1.2"><rect x="4.9" y="3.5" width="3.9" height="3.8" rx=".9"/><rect x="13" y="3.5" width="3.7" height="3.8" rx=".9"/><circle cx="6.85" cy="14" r="1.95"/><path d="M8.8 5.4H13M15.3 7.3V9.4Q15.3 13.7 8.8 14"/></g></g>
<g transform="translate(865.5 835.4)" fill="none" stroke="#979797" stroke-width="1.4" stroke-linecap="round" stroke-linejoin="round"><path d="M5.6 11.8V6.5Q5.6 4.5 7.6 4.5H17.4Q19.4 4.5 19.4 6.5V16.3Q19.4 18.3 17.4 18.3H12.2"/><rect x="5.6" y="13.9" width="4.5" height="4.4" rx="1.2"/><path d="M11.7 12.2L16.2 7.7M12.5 7.7H16.3V11.5"/></g>
<text x="695.00" y="851.40" font-size="13.6" fill="#a8a8a8" letter-spacing="0.257">Reference Conditioning</text>
<circle cx="675.60" cy="874.35" r="3.75" fill="#FFA931" stroke="rgba(0,0,0,.55)" stroke-width=".7"/>
<text x="685.20" y="878.65" font-size="12" fill="#b0b0b0" letter-spacing="0.17">positive</text>
<circle cx="675.60" cy="893.42" r="3.75" fill="#FFA931" stroke="rgba(0,0,0,.55)" stroke-width=".7"/>
<text x="685.20" y="897.72" font-size="12" fill="#b0b0b0" letter-spacing="0.17">negative</text>
<circle cx="675.60" cy="912.49" r="3.75" fill="#64B5F6" stroke="rgba(0,0,0,.55)" stroke-width=".7"/>
<text x="685.20" y="916.79" font-size="12" fill="#b0b0b0" letter-spacing="0.17">pixels</text>
<circle cx="675.60" cy="931.56" r="3.75" fill="#FF6E6E" stroke="rgba(0,0,0,.55)" stroke-width=".7"/>
<text x="685.20" y="935.86" font-size="12" fill="#b0b0b0" letter-spacing="0.17">vae</text>
<circle cx="886.60" cy="874.35" r="3.75" fill="#FFA931" stroke="rgba(0,0,0,.55)" stroke-width=".7"/>
<text x="876.97" y="878.65" font-size="12" fill="#b0b0b0" text-anchor="end" letter-spacing="0.17">positive</text>
<circle cx="886.60" cy="893.42" r="3.75" fill="#FFA931" stroke="rgba(0,0,0,.55)" stroke-width=".7"/>
<text x="876.97" y="897.72" font-size="12" fill="#b0b0b0" text-anchor="end" letter-spacing="0.17">negative</text>
</g>
<g class="node" id="node-gis">
<rect x="915.6" y="567.0" width="178.6" height="91.4" rx="8.0" fill="rgba(0,0,0,.6)" filter="url(#sh)"/>
<rect x="914.4" y="565.4" width="178.6" height="91.4" rx="8.0" fill="#353535"/>
<path d="M914.4 594.0V573.4Q914.4 565.4 922.4 565.4H1085.0Q1093.0 565.4 1093.0 573.4V594.0Z" fill="#323232"/>
<path d="M914.4 594.3H1093.0" stroke="#262626" stroke-width="1"/>
<circle cx="928.1" cy="579.6" r="4.8" fill="#6b6b6b"/>
<text x="942.80" y="584.40" font-size="13.6" fill="#a8a8a8" letter-spacing="0.083">Get Image Size</text>
<circle cx="923.40" cy="607.35" r="3.75" fill="#64B5F6" stroke="rgba(0,0,0,.55)" stroke-width=".7"/>
<text x="933.00" y="611.65" font-size="12" fill="#b0b0b0" letter-spacing="0.17">image</text>
<circle cx="1084.50" cy="607.35" r="3.75" fill="#77FF77" stroke="rgba(0,0,0,.55)" stroke-width=".7"/>
<text x="1074.87" y="611.65" font-size="12" fill="#b0b0b0" text-anchor="end" letter-spacing="0.17">width</text>
<circle cx="1084.50" cy="626.42" r="3.75" fill="#77FF77" stroke="rgba(0,0,0,.55)" stroke-width=".7"/>
<text x="1074.87" y="630.72" font-size="12" fill="#b0b0b0" text-anchor="end" letter-spacing="0.17">height</text>
<circle cx="1084.50" cy="645.49" r="3.75" fill="#777788" stroke="rgba(0,0,0,.55)" stroke-width=".7"/>
<text x="1074.67" y="649.79" font-size="12" fill="#b0b0b0" text-anchor="end" letter-spacing="-0.03">batch_size</text>
</g>
<g class="node" id="node-efl">
<rect x="1154.1" y="567.0" width="257.1" height="129.4" rx="8.0" fill="rgba(0,0,0,.6)" filter="url(#sh)"/>
<rect x="1152.9" y="565.4" width="257.1" height="129.4" rx="8.0" fill="#353535"/>
<path d="M1152.9 594.0V573.4Q1152.9 565.4 1160.9 565.4H1402.0Q1410.0 565.4 1410.0 573.4V594.0Z" fill="#323232"/>
<path d="M1152.9 594.3H1410.0" stroke="#262626" stroke-width="1"/>
<circle cx="1166.6" cy="579.6" r="4.8" fill="#6b6b6b"/>
<text x="1181.30" y="584.40" font-size="13.6" fill="#a8a8a8" letter-spacing="0.197">Empty Flux 2 Latent</text>
<circle cx="1401.50" cy="607.35" r="3.75" fill="#FF9CF9" stroke="rgba(0,0,0,.55)" stroke-width=".7"/>
<text x="1391.60" y="611.65" font-size="11.7" fill="#b0b0b0" text-anchor="end" letter-spacing="-0.1">LATENT</text>
<rect x="1166.7" y="618.8" width="229.0" height="19.1" rx="9.55" fill="#2b2b2b"/>
<circle cx="1162.20" cy="628.39" r="3.75" fill="#77FF77" stroke="rgba(0,0,0,.55)" stroke-width=".7"/>
<text x="1186.30" y="632.39" font-size="12" fill="#6f6f6f" letter-spacing="0.08">width</text>
<rect x="1166.7" y="641.7" width="229.0" height="19.1" rx="9.55" fill="#2b2b2b"/>
<circle cx="1162.20" cy="651.28" r="3.75" fill="#77FF77" stroke="rgba(0,0,0,.55)" stroke-width=".7"/>
<text x="1186.30" y="655.28" font-size="12" fill="#6f6f6f" letter-spacing="0.08">height</text>
<rect x="1167.2" y="664.9" width="228.0" height="18.5" rx="9.25" fill="#222" stroke="#666" stroke-width="1"/>
<path d="M1181.90 669.31L1172.50 674.11L1181.90 678.91Z" fill="#777"/>
<path d="M1380.50 669.31L1389.90 674.11L1380.50 678.91Z" fill="#ddd"/>
<text x="1186.30" y="678.16" font-size="12" fill="#b4b4b4" letter-spacing="-0.04">batch_size</text>
<text x="1362.60" y="678.16" font-size="12" fill="#e2e2e2" text-anchor="end" letter-spacing="0.2">1</text>
</g>
</svg></body></html>
